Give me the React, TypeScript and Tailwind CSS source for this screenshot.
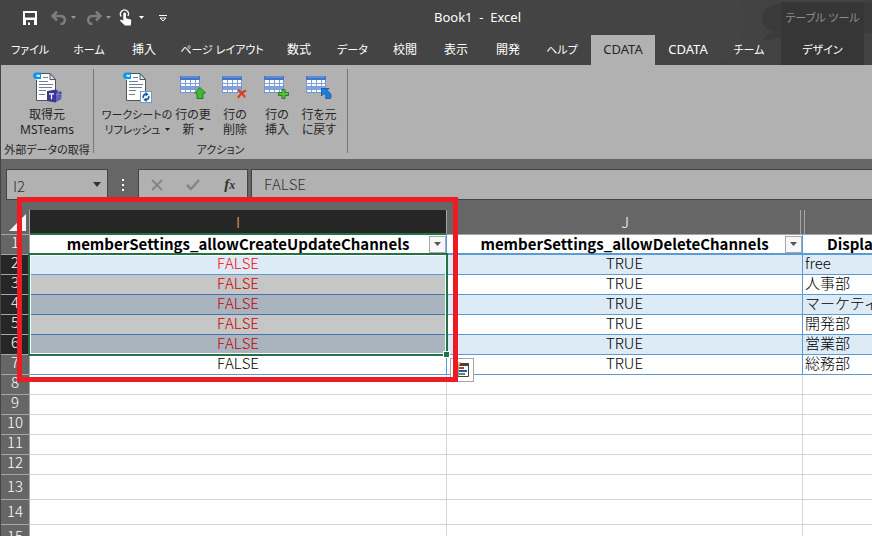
import { useState } from "react";
import clsx from "clsx";

const tabs = [
  { name: "ファイル", className: "w-[60px] text-[11px]" },
  { name: "ホーム", className: "w-[58px] text-[11px]" },
  { name: "挿入", className: "w-[52px] text-[12px]" },
  { name: "ページ レイアウト", className: "w-[104px] text-[11px]" },
  { name: "数式", className: "w-[50px] text-[12px]" },
  { name: "データ", className: "w-[57px] text-[11px]" },
  { name: "校閲", className: "w-[48px] text-[12px]" },
  { name: "表示", className: "w-[54px] text-[12px]" },
  { name: "開発", className: "w-[50px] text-[12px]" },
  { name: "ヘルプ", className: "w-[58px] text-[11px]" },
  { name: "CDATA", className: "w-[64px] text-[13px]", active: true },
  { name: "CDATA", className: "w-[66px] text-[13px]" },
  { name: "チーム", className: "w-[56px] text-[11px]" },
];

const rows = [
  { i: "FALSE", j: "TRUE", k: "free" },
  { i: "FALSE", j: "TRUE", k: "人事部" },
  { i: "FALSE", j: "TRUE", k: "マーケティング部" },
  { i: "FALSE", j: "TRUE", k: "開発部" },
  { i: "FALSE", j: "TRUE", k: "営業部" },
  { i: "FALSE", j: "TRUE", k: "総務部" },
];

const emptyRows = [8, 9, 10, 11, 12, 13, 14, 15];

function Caret({ className }: { className?: string }) {
  return (
    <svg width="5" height="3" viewBox="0 0 5 3" className={clsx("inline-block shrink-0", className)}>
      <path d="M0 0h5L2.5 3z" fill="currentColor" />
    </svg>
  );
}

function SaveIcon() {
  return (
    <svg width="14" height="14" viewBox="0 0 14 14">
      <path
        d="M0 0h14v14H0zM2 2v4.500h10V2zM3 9v5h2v-2.500h2V14h4V9z"
        fill="#fff"
        fillRule="evenodd"
      />
    </svg>
  );
}

function UndoIcon({ flip }: { flip?: boolean }) {
  return (
    <svg width="16" height="14" viewBox="0 0 16 14" fill="none" className={clsx("text-[#7d7d7d]", flip && "-scale-x-100")}>
      <path d="M6 0.500L1.500 5l4.500 4.500M2 5h7c3.500 0 4.800 2 4.800 4 0 2.500-2 4-4.300 4" stroke="currentColor" strokeWidth="2.500" />
    </svg>
  );
}

function TouchIcon() {
  return (
    <svg width="13" height="17" viewBox="0 0 13 17">
      <path d="M2.300 7.500A4 4 0 1 1 8.900 7" fill="none" stroke="#fff" strokeWidth="1.300" />
      <path d="M4.300 4.800c0-1.600 2.700-1.600 2.700 0v4.400l4 1c1 .3 1.400.9 1.300 1.900l-.6 4.400H6L1.300 12c-.6-.8.4-1.700 1.300-1.200l1.700 1z" fill="#fff" />
    </svg>
  );
}

function DocIcon({ kind }: { kind: "teams" | "refresh" }) {
  return (
    <svg width="31" height="32" viewBox="0 0 31 32">
      <path d="M4.500 1.500H18l5.500 6v21h-19z" fill="#fff" />
      <path d="M4.500 8v20.500h18M9 1.500h9l5.500 6V20" fill="none" stroke="#4a5563" />
      <path d="M18 1.500v6h5.500z" fill="#dfe5ea" stroke="#4a5563" />
      <path d="M11 5.500h5M7 9.500h9M7 12.500h14M7 15.500h13M7 18.500h7M7 22.500h6" stroke="#71808e" />
      <path d="M9 0.500H4.500C0 0.500 0 7 4.500 7H9z" fill="#0796e8" />
      <path d="M8 3.800H4.500" stroke="#e4f4ff" strokeWidth="2" />
      {kind === "teams" ? (
        <g>
          <circle cx="24" cy="20" r="2.300" fill="#4b48b0" />
          <circle cx="28" cy="21" r="1.700" fill="#4b48b0" />
          <path d="M21 22.500h8.500v4q-1 2-3 2-1.500 2-5 1.500z" fill="#6260bd" />
          <path d="M15 19l9-1.500v13L15 29z" fill="#3a3792" />
          <path d="M17 21.800h5M19.500 21.800v5.500" stroke="#fff" strokeWidth="1.300" />
        </g>
      ) : (
        <g>
          <rect x="18.500" y="19.500" width="11" height="11" fill="#fff" stroke="#7797c2" />
          <path d="M21.500 26c-1-2 .7-4.300 3-3.900M26.500 24c1 2-.7 4.300-3 3.900" fill="none" stroke="#1359a5" strokeWidth="1.700" />
          <path d="M23.500 20l3.200 2.200-3.200 2.200zM24.500 25.600V30l-3.200-2.200z" fill="#1359a5" />
        </g>
      )}
    </svg>
  );
}

function RowsIcon({ kind }: { kind: "update" | "delete" | "insert" | "undo" }) {
  return (
    <svg width="27" height="24" viewBox="0 0 27 24">
      <rect x="0.500" y="0.500" width="19" height="16" fill="#fff" stroke="#6f95d1" />
      <path d="M0 0h20v4H0z" fill="#4475c9" />
      <path d="M1 1h18" stroke="#7ba1e2" />
      <path d="M1 10h18v3.500H1z" fill="#7ba2e6" />
      <path d="M0 7.500h20M0 10.500h20M0 13.500h20M5.500 4v13M10.500 4v13M15.500 4v13" stroke="#7f9fd6" />
      {kind === "update" && (
        <path d="M20 11.500l5.500 5.500h-2.500v5.500h-6V17h-2.500z" fill="#43b637" stroke="#238020" />
      )}
      {kind === "delete" && (
        <path d="M16 14q4 2 7 7.500M24 14.500q-5 2-8 7.500" fill="none" stroke="#dc3b19" strokeWidth="2" />
      )}
      {kind === "insert" && (
        <path d="M18 13.500h3v3h3.500v3H21v3h-3v-3h-3.500v-3H18z" fill="#58bf44" stroke="#238020" />
      )}
      {kind === "undo" && (
        <path d="M15.500 12.500h7.500l-2 2.200c3.500 1.500 5 4.800 3.500 7.800h-5c1-2 .500-3.800-1.500-5l-2.500 2.500z" fill="#1d7dd8" stroke="#0b55a5" strokeWidth="0.800" />
      )}
    </svg>
  );
}

function FilterButton({ label }: { label: string }) {
  return (
    <button
      aria-label={label}
      className="flex h-[17px] w-[17px] shrink-0 items-center justify-center border border-[#a3a9b3] bg-[#f7f7f7] text-[#555]"
    >
      <svg width="7" height="4" viewBox="0 0 7 4">
        <path d="M0 0h7L3.500 4z" fill="currentColor" />
      </svg>
    </button>
  );
}

function TitleArea() {
  return (
    <header className="relative flex bg-[#444] text-white">
      <svg className="absolute top-0 right-0" width="162" height="65" viewBox="0 0 162 65">
        <path d="M30 0h132v65H5Q45 48 30 0z" fill="#424242" />
        <path d="M74 2q-22 4-22 16 0 11 12 14-8 2-12 9 14-4 26-3l84-5V2z" fill="#3b3b3b" />
      </svg>
      <div className="relative min-w-0 flex-1">
        <div className="flex h-[35px] items-center">
          <div className="flex w-[434px] shrink-0 items-center pl-[23px]">
            <button aria-label="上書き保存"><SaveIcon /></button>
            <button aria-label="元に戻す" className="ml-[14px] flex items-center gap-1 text-[#999]">
              <UndoIcon />
              <Caret />
            </button>
            <button aria-label="やり直し" className="ml-[10px] flex items-center gap-1 text-[#999]">
              <UndoIcon flip />
              <Caret />
            </button>
            <button aria-label="タッチ/マウス モードの切り替え" className="ml-2 flex items-center gap-[7px]">
              <TouchIcon />
              <Caret />
            </button>
            <button aria-label="クイック アクセス ツール バーのユーザー設定" className="ml-[15px]">
              <svg width="8" height="8" viewBox="0 0 8 8" fill="none" stroke="#fff">
                <path d="M0 1.500h8M1 4l3 3 3-3z" />
              </svg>
            </button>
          </div>
          <h1 className="text-[13px] whitespace-pre">Book1  -  Excel</h1>
        </div>
        <nav className="flex h-[30px]">
          {tabs.map((tab, index) => (
            <button
              key={index}
              className={clsx(
                "shrink-0 text-center whitespace-nowrap",
                tab.className,
                tab.active ? "bg-[#b1b1b1] text-[#262626]" : "text-white"
              )}
            >
              {tab.name}
            </button>
          ))}
        </nav>
      </div>
      <div className="relative mt-[2px] mr-2 flex w-[83px] flex-col bg-[#363636] text-[11px]">
        <div className="flex h-[33px] items-center justify-center whitespace-nowrap text-[#8f8f8f]">テーブル ツール</div>
        <button className="h-[30px]">デザイン</button>
      </div>
    </header>
  );
}

function RibbonButton({ icon, lines, menu, className }: { icon: React.ReactNode; lines: string[]; menu?: boolean; className: string }) {
  return (
    <button className={clsx("flex shrink-0 flex-col items-center leading-[15px] whitespace-nowrap", className)}>
      <span className="flex h-[38px] items-center justify-center">{icon}</span>
      <span>{lines[0]}</span>
      <span className="flex items-center gap-1">
        {lines[1]}
        {menu && <Caret />}
      </span>
    </button>
  );
}

function Ribbon() {
  return (
    <section className="flex h-[94px] bg-[#b1b1b1] py-1 text-[12px] text-[#262626]">
      <div className="flex h-[84px] w-[93px] flex-col items-center border-r border-[#777]">
        <RibbonButton className="w-[92px]" icon={<DocIcon kind="teams" />} lines={["取得元", "MSTeams"]} />
        <div className="mt-1 text-[11px] leading-[18px] whitespace-nowrap">外部データの取得</div>
      </div>
      <div className="flex h-[84px] w-[254px] flex-col items-center border-r border-[#777]">
        <div className="flex w-full pl-2">
          <RibbonButton className="w-[70px] text-[11px]" icon={<DocIcon kind="refresh" />} lines={["ワークシートの", "リフレッシュ"]} menu />
          <RibbonButton className="w-[42px]" icon={<RowsIcon kind="update" />} lines={["行の更", "新"]} menu />
          <RibbonButton className="w-[42px]" icon={<RowsIcon kind="delete" />} lines={["行の", "削除"]} />
          <RibbonButton className="w-[42px]" icon={<RowsIcon kind="insert" />} lines={["行の", "挿入"]} />
          <RibbonButton className="w-[42px]" icon={<RowsIcon kind="undo" />} lines={["行を元", "に戻す"]} />
        </div>
        <div className="mt-1 text-[11px] leading-[18px]">アクション</div>
      </div>
    </section>
  );
}

function FormulaBar() {
  const [formula, setFormula] = useState("FALSE");

  return (
    <div className="flex h-[41px] pt-[10px] pl-[5px] font-['Noto_Sans_CJK_JP',sans-serif] text-[15px] font-light text-[#333] [font-kerning:none]">
      <div className="flex w-[102px] items-center border border-[#444] bg-[#b1b1b1] pr-[6px] pl-[6px]">
        <input aria-label="名前ボックス" defaultValue="I2" className="mt-1 w-0 flex-1 bg-transparent outline-none" />
        <button aria-label="名前の一覧">
          <svg width="8" height="5" viewBox="0 0 8 5">
            <path d="M0 0h8L4 5z" fill="#333" />
          </svg>
        </button>
      </div>
      <div className="flex w-[30px] flex-col items-center justify-center gap-[3px]">
        <span className="h-[2px] w-[2px] bg-white" />
        <span className="h-[2px] w-[2px] bg-white" />
        <span className="h-[2px] w-[2px] bg-white" />
      </div>
      <div className="flex w-[110px] items-center justify-around border border-[#444] bg-[#b1b1b1]">
        <button aria-label="キャンセル">
          <svg width="12" height="12" viewBox="0 0 12 12">
            <path d="M1 1l10 10M11 1L1 11" stroke="#858585" strokeWidth="2" />
          </svg>
        </button>
        <button aria-label="入力">
          <svg width="14" height="12" viewBox="0 0 14 12">
            <path d="M1 6l4 4 8-9" fill="none" stroke="#858585" strokeWidth="2.500" />
          </svg>
        </button>
        <button aria-label="関数の挿入" className="font-['Liberation_Serif',serif] text-[15px] leading-[16px] font-bold text-[#333] italic">
          f<span className="text-[12px]">x</span>
        </button>
      </div>
      <input
        aria-label="数式バー"
        value={formula}
        onChange={(e) => setFormula(e.target.value)}
        className="ml-[3px] min-w-0 flex-1 border-y border-l border-[#444] bg-[#b1b1b1] pl-3 outline-none"
      />
    </div>
  );
}

function Sheet() {
  const rowHeader = "border-r border-b border-[#a6a6a6] p-0 text-center align-top font-light leading-[14px] text-white";
  const cell = "border-b border-[#5b9bd5] p-0 align-top leading-[16px] font-light";

  return (
    <div className="relative flex-1 pt-[10px] font-['Noto_Sans_CJK_JP',sans-serif] text-[15px] text-black [font-feature-settings:normal]">
      <table className="w-full table-fixed border-separate border-spacing-0 leading-[18px] whitespace-nowrap">
        <colgroup>
          <col className="w-[29px]" />
          <col className="w-[417px]" />
          <col className="w-[356px]" />
          <col />
        </colgroup>
        <thead>
          <tr className="h-[25px] text-white">
            <td className="border-r border-b border-[#a6a6a6] p-0">
              <svg width="28" height="24" viewBox="0 0 28 24" className="block">
                <path d="M8 21h17V4z" fill="#f4f4f4" />
              </svg>
            </td>
            <th scope="col" className="border-r border-b-2 border-r-[#a6a6a6] border-b-[#217346] bg-[#262626] p-0 font-light text-[#f2b878]">I</th>
            <th scope="col" className="border-b border-[#a6a6a6] p-0 font-light">
              <div className="flex h-6">
                <span className="flex-1 self-center">J</span>
                <span className="-ml-[3px] w-[3px] border-l border-[#a6a6a6]" />
              </div>
            </th>
            <th scope="col" aria-label="K" className="border-b border-[#a6a6a6] p-0">
              <div className="ml-px h-6 border-l border-[#a6a6a6]" />
            </th>
          </tr>
        </thead>
        <tbody>
          <tr className="h-5 bg-white">
            <th scope="row" className={clsx(rowHeader, "bg-[#666]")}>1</th>
            <th className="border-r border-b-2 border-[#5b9bd5] p-0">
              <div className="flex h-[18px] items-center">
                <span className="flex-1 pl-[17px]">memberSettings_allowCreateUpdateChannels</span>
                <FilterButton label="allowCreateUpdateChannels フィルター" />
              </div>
            </th>
            <th className="border-r border-b-2 border-[#5b9bd5] p-0">
              <div className="flex h-[18px] items-center">
                <span className="flex-1 pl-[17px]">memberSettings_allowDeleteChannels</span>
                <FilterButton label="allowDeleteChannels フィルター" />
              </div>
            </th>
            <th className="overflow-hidden border-b-2 border-[#5b9bd5] p-0 pl-6 text-left">DisplayName</th>
          </tr>
          {rows.map((row, index) => {
            const selected = index < 5;
            const banded = index % 2 === 0;
            return (
              <tr key={index} className={clsx("h-5", banded ? "bg-[#ddebf7]" : "bg-white")}>
                <th scope="row" className={clsx(rowHeader, selected ? "bg-[#262626]" : "bg-[#666]")}>{index + 2}</th>
                <td
                  className={clsx(
                    cell,
                    "border-r text-center [font-kerning:none]",
                    selected && index > 0 && "border-b-[#3f77ad]",
                    selected && index > 0 && (banded ? "bg-[#aab4bf]" : "bg-[#c6c6c6]"),
                    selected && (index === 0 ? "text-[#ff0000]" : "text-[#c80000]")
                  )}
                >
                  {row.i}
                </td>
                <td className={clsx(cell, "border-r text-center [font-kerning:none]")}>{row.j}</td>
                <td className={clsx(cell, "overflow-hidden pl-[2px]")}>{row.k}</td>
              </tr>
            );
          })}
          {emptyRows.map((n) => (
            <tr key={n} className={clsx("bg-white", n < 13 ? "h-5" : "h-[25px]")}>
              <th scope="row" className={clsx(rowHeader, "bg-[#666]", n > 12 && "pt-1")}>{n}</th>
              <td className="border-r border-b border-[#d4d4d4] p-0" />
              <td className="border-r border-b border-[#d4d4d4] p-0" />
              <td className="border-b border-[#d4d4d4] p-0" />
            </tr>
          ))}
        </tbody>
      </table>

      {/* selected range */}
      <div className="pointer-events-none absolute top-[53px] left-[27px] h-[103px] w-[420px] border-2 border-[#217346]">
        <div className="h-full border border-white" />
        <span className="absolute -right-[4px] -bottom-[4px] h-[7px] w-[7px] border border-white bg-[#217346]" />
      </div>

      {/* quick analysis */}
      <button
        aria-label="クイック分析"
        className="absolute top-[158px] left-[449px] flex h-6 w-6 items-center justify-center border border-[#a6a6a6] bg-white"
      >
        <svg width="16" height="16" viewBox="0 0 16 16">
          <path d="M4 1.500h10.500v13H4z" fill="#fff" stroke="#444" />
          <path d="M4 1h11v3H4z" fill="#444" />
          <path d="M0 0h7L5 4H0z" fill="#edb85f" />
          <path d="M5 5h5v2H5z" fill="#c0392b" />
          <path d="M5 8h8v2H5z" fill="#2b579a" />
          <path d="M5 11h6v2H5z" fill="#4f8f75" />
        </svg>
      </button>

      {/* highlight frame */}
      <div className="pointer-events-none absolute -top-[3px] left-4 h-[185px] w-[441px] border-[5px] border-[#ed1c24]" />
    </div>
  );
}

export default function App() {
  return (
    <div className="flex h-screen flex-col overflow-hidden bg-[#666] font-['Noto_Sans','Noto_Sans_CJK_JP',sans-serif] [font-feature-settings:'palt']">
      <TitleArea />
      <main className="flex flex-1 flex-col border-l border-[#444]">
        <Ribbon />
        <FormulaBar />
        <Sheet />
      </main>
    </div>
  );
}
